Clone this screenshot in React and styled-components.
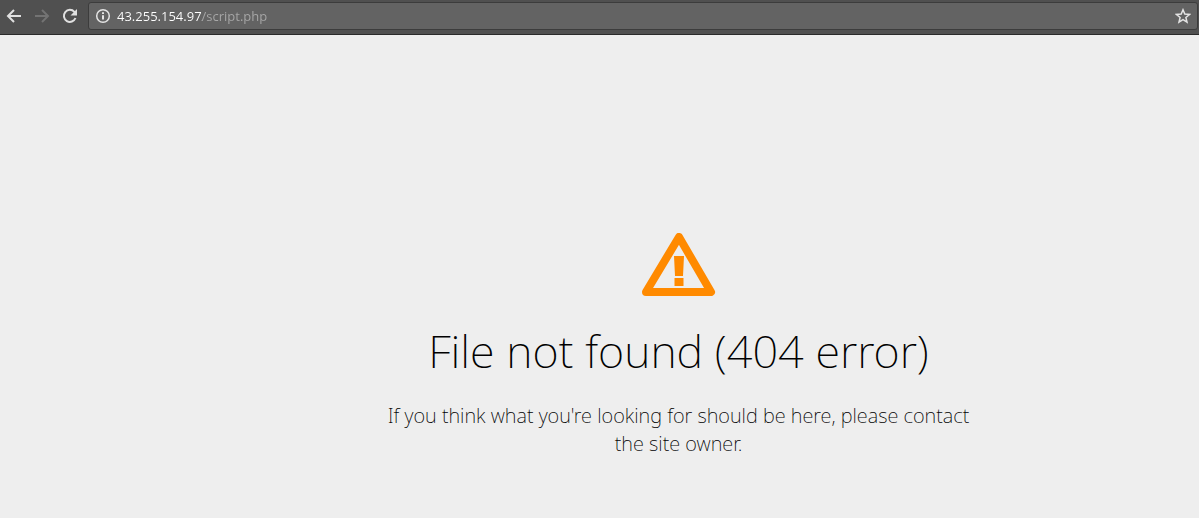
import React from "react";
import styled, { createGlobalStyle } from "styled-components";

const App = () => {
  return (
    <>
      <GlobalStyle />
      <Toolbar>
        <NavButtons>
          <NavButton type="button" aria-label="Back">
            <svg width="16" height="16" viewBox="0 0 16 16">
              <path d="M15 8H2M8 2L2 8l6 6" />
            </svg>
          </NavButton>
          <NavButton type="button" aria-label="Forward" disabled>
            <svg width="16" height="16" viewBox="0 0 16 16">
              <path d="M1 8h13M8 2l6 6-6 6" />
            </svg>
          </NavButton>
          <NavButton type="button" aria-label="Reload">
            <svg width="16" height="16" viewBox="0 0 16 16">
              <path d="M13.5 10A6 6 0 1 1 12.4 3.9L13.4 5" />
              <path className="fill" d="M15 1v6.500H8.500z" />
            </svg>
          </NavButton>
        </NavButtons>
        <AddressBar>
          <IconButton type="button" aria-label="Site information">
            <svg width="16" height="16" viewBox="0 0 16 16">
              <circle cx="8" cy="8" r="6.300" />
              <path className="info" d="M8 7.200v4.300M8 4.300v1.700" />
            </svg>
          </IconButton>
          <AddressInput
            type="text"
            aria-label="Address"
            defaultValue="43.255.154.97/script.php"
            spellCheck={false}
          />
          <IconButton type="button" aria-label="Bookmark this page">
            <svg width="16" height="16" viewBox="0 0 16 16">
              <path d="M8 1.800l1.800 4.300 4.700.4-3.600 3 1.100 4.600L8 11.700l-4 2.400 1.100-4.600-3.600-3 4.700-.4z" />
            </svg>
          </IconButton>
        </AddressBar>
      </Toolbar>
      <Page>
        <Message>
          <WarningIcon viewBox="0 0 74 64" aria-hidden="true">
            <path className="triangle" d="M37 4L69 59H4z" />
            <path className="mark" d="M32 23h10l-1 20h-8zM32.500 45h9v8h-9z" />
          </WarningIcon>
          <Title>File not found (404 error)</Title>
          <Text>
            If you think what you're looking for should be here, please contact
            the site owner.
          </Text>
        </Message>
      </Page>
    </>
  );
};

export default App;

const GlobalStyle = createGlobalStyle`
  * {
    box-sizing: border-box;
  }
  body {
    margin: 0;
    background: #eeeeee;
    font-family: "Noto Sans", "Open Sans", sans-serif;
  }
`;

const Toolbar = styled.header`
  display: flex;
  align-items: center;
  gap: 10px;
  height: 35px;
  padding: 0 1px 2px 6px;
  background: #505050;
  border-bottom: 1px solid #2a2a2a;
`;

const NavButtons = styled.nav`
  display: flex;
  gap: 12px;
`;

const NavButton = styled.button`
  display: flex;
  padding: 0;
  border: none;
  background: none;
  color: ${(props) => (props.disabled ? "#737373" : "#e0e0e0")};

  svg {
    fill: none;
    stroke: currentColor;
    stroke-width: 2;
  }
  .fill {
    fill: currentColor;
    stroke: none;
  }
`;

const AddressBar = styled.div`
  flex: 1;
  display: flex;
  align-items: center;
  gap: 6px;
  height: 28px;
  padding: 0 6px;
  background: #636363;
  border: 1px solid #3c3c3c;
  border-radius: 3px;
`;

const IconButton = styled.button`
  display: flex;
  padding: 0;
  border: none;
  background: none;
  color: #e4e4e4;

  svg {
    fill: none;
    stroke: currentColor;
    stroke-width: 1.5;
  }
  .info {
    stroke-width: 2;
  }
`;

/* the host is bright, the path after it is dimmed */
const AddressInput = styled.input`
  flex: 1;
  min-width: 0;
  height: 20px;
  padding: 0;
  border: none;
  outline: none;
  font-family: "Open Sans", "Noto Sans", sans-serif;
  font-size: 13px;
  color: transparent;
  caret-color: #ffffff;
  background: linear-gradient(to right, #ffffff 85px, #a8a8a8 85px);
  background-clip: text;
`;

const Page = styled.main`
  display: flex;
  justify-content: center;
  padding: 198px 0 56px 158px;
`;

const Message = styled.section`
  display: flex;
  flex-direction: column;
  align-items: center;
  max-width: 600px;
  text-align: center;
`;

const WarningIcon = styled.svg`
  width: 74px;
  height: 64px;

  .triangle {
    fill: none;
    stroke: #ff8a00;
    stroke-width: 8;
    stroke-linejoin: round;
  }
  .mark {
    fill: #ff8a00;
  }
`;

const Title = styled.h1`
  margin: 22px 0 0;
  font-size: 45px;
  font-weight: 200;
  line-height: 64px;
  color: #000000;
`;

const Text = styled.p`
  margin: 19px 0 0;
  font-size: 20px;
  font-weight: 200;
  line-height: 28px;
  color: #000000;
`;
